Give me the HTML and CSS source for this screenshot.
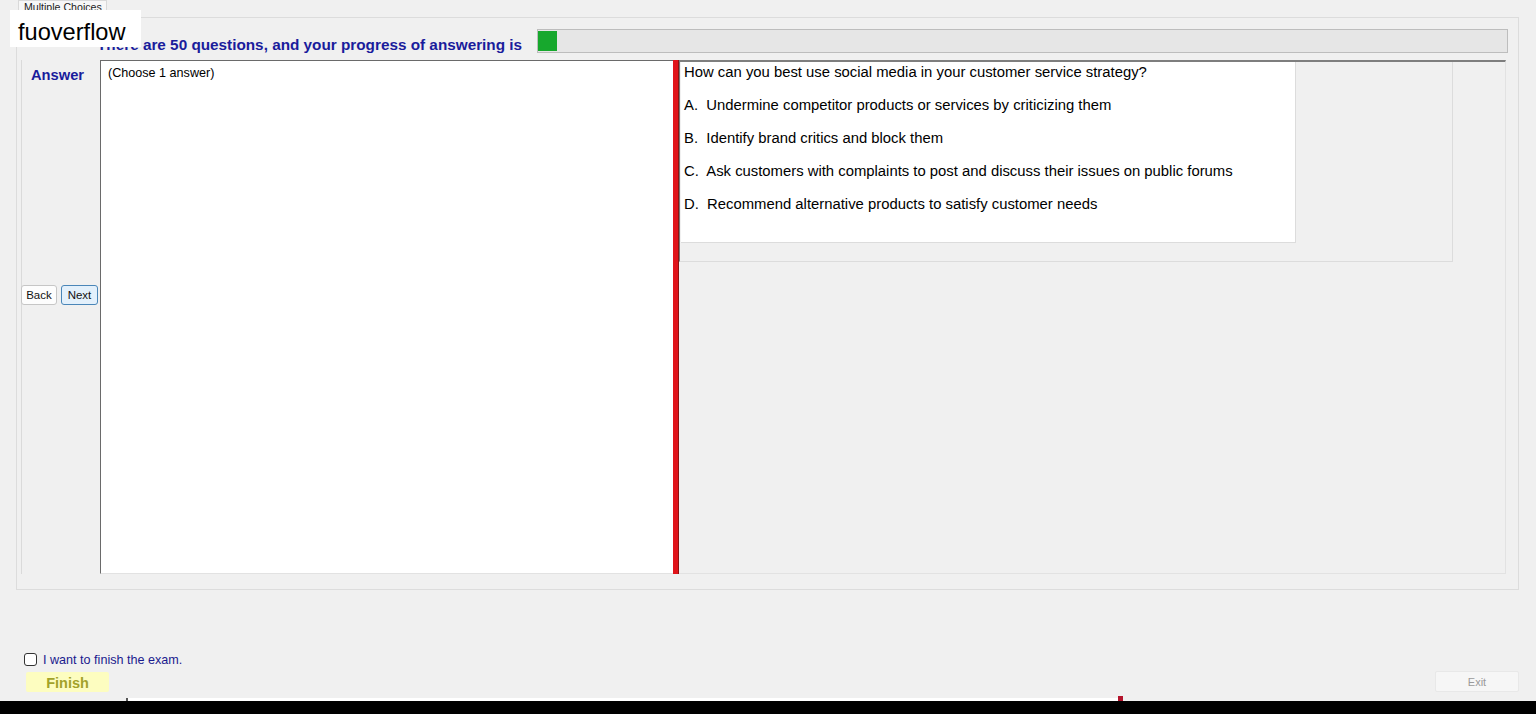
FILE: index.html
```html
<!DOCTYPE html>
<html lang="en">
<head>
<meta charset="utf-8">
<title>Multiple Choices</title>
<link rel="stylesheet" href="styles.css">
</head>
<body>
<div class="window">
  <div class="watermark">fuoverflow</div>

  <div class="tabstrip">
    <div class="tab">Multiple Choices</div>
  </div>

  <div class="tabpage">
    <div class="title-row">
      <div class="title">There are 50 questions, and your progress of answering is</div>
      <div class="progress"><div class="progress-fill" style="width:19px"></div></div>
    </div>

    <div class="work">
      <div class="side">
        <div class="answer-label">Answer</div>
        <div class="nav">
          <button class="btn">Back</button>
          <button class="btn btn-next">Next</button>
        </div>
      </div>

      <div class="main">
        <div class="answer-box">(Choose 1 answer)</div>
        <div class="splitter"></div>
        <div class="question-pane">
          <div class="question-frame">
            <div class="question-card">
              <p>How can you best use social media in your customer service strategy?</p>
              <p>A.&nbsp; Undermine competitor products or services by criticizing them</p>
              <p>B.&nbsp; Identify brand critics and block them</p>
              <p>C.&nbsp; Ask customers with complaints to post and discuss their issues on public forums</p>
              <p>D.&nbsp; Recommend alternative products to satisfy customer needs</p>
            </div>
          </div>
        </div>
      </div>
    </div>
  </div>

  <div class="footer">
    <label class="finish-check"><span class="checkbox"></span>I want to finish the exam.</label>
    <div class="footer-row">
      <button class="finish">Finish</button>
      <button class="exit">Exit</button>
    </div>
  </div>

  <div class="scroll-strip">
    <div class="strip-track"><span class="strip-mark"></span></div>
  </div>
  <div class="taskbar"></div>
</div>
</body>
</html>
```

FILE: styles.css
```css
* { box-sizing: border-box; }

html, body {
  margin: 0;
  padding: 0;
}

body {
  background: #f0f0f0;
  font-family: "Liberation Sans", Arial, sans-serif;
  color: #000;
}

.window {
  position: relative;
  width: 1536px;
  height: 714px;
  overflow: hidden;
  display: flex;
  flex-direction: column;
}

/* label stamped over the top-left corner */
.watermark {
  position: absolute;
  left: 10px;
  top: 10px;
  width: 131px;
  height: 37px;
  background: #fff;
  font-size: 23.6px;
  line-height: 30px;
  padding: 7px 0 0 8px;
  color: #000;
  z-index: 5;
}

/* tab header */
.tabstrip {
  height: 17px;
  flex: none;
  display: flex;
  padding-left: 18px;
}

.tab {
  width: 89px;
  height: 16px;
  border: 1px solid #d9d9d9;
  border-bottom: none;
  background: #f7f7f7;
  font-size: 10.6px;
  line-height: 12px;
  color: #222;
  padding-left: 5px;
  overflow: hidden;
  white-space: nowrap;
}

/* tab page */
.tabpage {
  flex: none;
  height: 573px;
  margin: 0 17px 0 16px;
  border: 1px solid #dcdcdc;
  padding-top: 11px;
}

.title-row {
  display: flex;
  align-items: flex-start;
  height: 24px;
}

.title {
  width: 520px;
  padding: 7px 0 0 80px;
  font-size: 15.3px;
  line-height: 17px;
  font-weight: bold;
  color: #1a1c9c;
  white-space: nowrap;
}

.progress {
  width: 971px;
  height: 24px;
  border: 1px solid #bdbdbd;
  background: #e6e6e6;
  padding: 1px 0 0 0;
}

.progress-fill {
  height: 20px;
  background: #17a82d;
}

.work {
  display: flex;
  margin-top: 7px;
  height: 514px;
}

.side {
  width: 79px;
  margin-left: 4px;
  border-left: 1px solid #dadada;
  display: flex;
  flex-direction: column;
}

.answer-label {
  padding: 7px 0 0 9px;
  line-height: 17px;
  font-size: 14.7px;
  font-weight: bold;
  color: #1a1c9c;
}

.nav {
  margin-top: 201px;
  margin-left: -1px;
  display: flex;
  gap: 4px;
}

.btn {
  height: 20px;
  width: 36px;
  padding: 0;
  border: 1px solid #c6c6c6;
  border-radius: 3px;
  background: #fdfdfd;
  font-family: "Liberation Sans", Arial, sans-serif;
  font-size: 11.5px;
  color: #111;
}

.btn-next {
  width: 37px;
  background: #e3f0fb;
  border-color: #4a86b8;
}

.main {
  width: 1406px;
  display: flex;
}

.answer-box {
  width: 573px;
  background: #fff;
  border-left: 1px solid #6a6a6a;
  border-top: 1px solid #6a6a6a;
  border-bottom: 1px solid #e2e2e2;
  padding: 5px 0 0 7px;
  font-size: 12.6px;
  line-height: 15px;
}

.splitter {
  width: 6px;
  background: #e0141a;
  border-right: 1px solid #8e1212;
}

.question-pane {
  flex: 1;
  border-top: 2px solid #7e7e7e;
  border-right: 1px solid #e2e2e2;
  border-bottom: 1px solid #e2e2e2;
}

.question-frame {
  width: 774px;
  height: 200px;
  border-left: 1px solid #777;
  border-right: 1px solid #dcdcdc;
  border-bottom: 1px solid #dcdcdc;
  padding-left: 1px;
}

.question-card {
  width: 615px;
  height: 181px;
  background: #fff;
  border-right: 1px solid #dcdcdc;
  border-bottom: 1px solid #dcdcdc;
  padding: 2px 0 0 3px;
}

.question-card p {
  margin: 0 0 16px;
  font-size: 14.85px;
  line-height: 17px;
  white-space: nowrap;
}

/* footer controls */
.footer {
  flex: none;
  margin-top: 62px;
  padding: 0 17px 0 24px;
}

.finish-check {
  display: flex;
  align-items: center;
  height: 14px;
  font-size: 12.6px;
  line-height: 16px;
  padding-top: 1px;
  color: #1a1a8e;
}

.checkbox {
  width: 13px;
  height: 13px;
  border: 1px solid #333;
  border-radius: 3px;
  background: #fff;
  margin-right: 6px;
}

.footer-row {
  margin-top: 6px;
  display: flex;
  justify-content: space-between;
  align-items: flex-start;
}

.finish {
  margin-left: 2px;
  width: 83px;
  height: 20px;
  border: none;
  border-radius: 2px;
  background: #fdfdc0;
  font-family: "Liberation Sans", Arial, sans-serif;
  font-size: 14.5px;
  font-weight: bold;
  color: #a2a22a;
  padding: 2px 0 0;
}

.exit {
  width: 84px;
  height: 21px;
  margin-top: -1px;
  border: 1px solid #e8e8e8;
  border-radius: 2px;
  background: #f6f6f6;
  font-family: "Liberation Sans", Arial, sans-serif;
  font-size: 11px;
  color: #9a9a9a;
  padding: 0;
}

.scroll-strip {
  flex: none;
  margin-top: 6px;
  height: 3px;
  padding-left: 126px;
}

.strip-track {
  position: relative;
  width: 994px;
  height: 3px;
  background: #fff;
  border-left: 2px solid #555;
}

.strip-mark {
  position: absolute;
  right: -3px;
  top: -2px;
  width: 5px;
  height: 5px;
  background: #b3142c;
}

.taskbar {
  flex: 1;
  background: #000;
}
```
